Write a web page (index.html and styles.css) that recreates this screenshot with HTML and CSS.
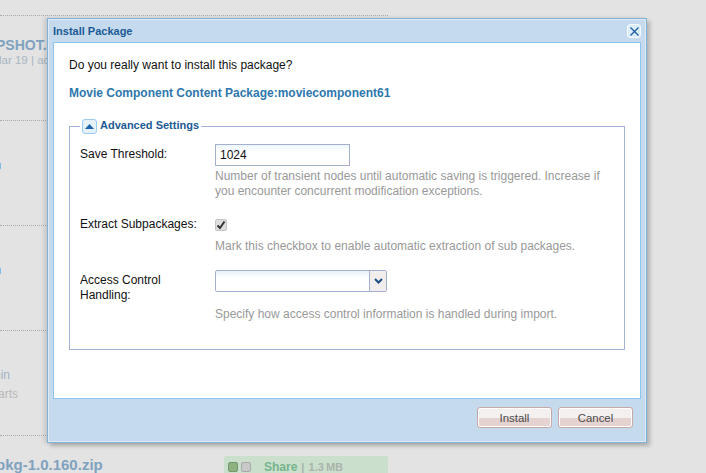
FILE: index.html
```html
<!DOCTYPE html>
<html>
<head>
  <meta name="viewport" content="width=device-width, initial-scale=1.0">
  <link rel="stylesheet" href="styles.css">
</head>
<body>

  <!-- Package list behind the mask -->
  <div class="list">
    <div class="row">
      <div class="pkg-name pkg-first">PSHOT.</div>
      <div class="pkg-meta">lar 19 | ad</div>
    </div>
    <div class="row"><span class="tick"></span></div>
    <div class="row"><span class="tick"></span></div>
    <div class="row">
      <div class="side-link">nin</div>
      <div class="side-text">arts</div>
    </div>
    <div class="row-last">
      <div class="pkg-name">pkg-1.0.160.zip</div>
      <div class="share-bar">
        <span class="sq sq-green"></span>
        <span class="sq sq-gray"></span>
        <span class="share">Share</span>
        <span class="size">|&nbsp; 1.3 MB</span>
      </div>
    </div>
  </div>

  <div class="dialog">
    <div class="dialog-head">
      <span class="dialog-title">Install Package</span>
      <button class="tool-btn close-btn" type="button">
        <svg width="9" height="9" viewBox="0 0 9 9"><path d="M.5.5 8.500 8.500M8.500.5 .5 8.500" stroke="#1c5a9c" stroke-width="1.2" fill="none"/></svg>
      </button>
    </div>

    <div class="dialog-body">
      <p class="question">Do you really want to install this package?</p>
      <p class="pkg-title">Movie Component Content Package:moviecomponent61</p>

      <fieldset class="settings">
        <legend>
          <button class="tool-btn toggle-btn" type="button">
            <svg width="9" height="5" viewBox="0 0 9 5"><path d="M4.500 0 9 5H0Z" fill="#1c62ac"/></svg>
          </button>
          <span class="legend-text">Advanced Settings</span>
        </legend>

        <div class="field field-threshold">
          <label class="field-label">Save Threshold:</label>
          <div class="field-main">
            <input class="text-input" type="text" value="1024">
            <p class="help">Number of transient nodes until automatic saving is triggered. Increase if you encounter concurrent modification exceptions.</p>
          </div>
        </div>

        <div class="field field-extract">
          <label class="field-label">Extract Subpackages:</label>
          <div class="field-main">
            <span class="check">
              <svg width="10" height="10" viewBox="0 0 10 10"><path d="M1.500 5.500 4 8 8.500 1.500" stroke="#333" stroke-width="2" fill="none"/></svg>
            </span>
            <p class="help">Mark this checkbox to enable automatic extraction of sub packages.</p>
          </div>
        </div>

        <div class="field">
          <label class="field-label">Access Control Handling:</label>
          <div class="field-main">
            <div class="combo">
              <span class="combo-text"></span>
              <span class="combo-arrow">
                <svg width="9" height="6" viewBox="0 0 9 6"><path d="M1 1 4.500 4.500 8 1" stroke="#1d4f80" stroke-width="2" fill="none"/></svg>
              </span>
            </div>
            <p class="help">Specify how access control information is handled during import.</p>
          </div>
        </div>
      </fieldset>
    </div>

    <div class="dialog-foot">
      <button class="foot-btn" type="button">Install</button>
      <button class="foot-btn" type="button">Cancel</button>
    </div>
  </div>

</body>
</html>
```

FILE: styles.css
```css
html, body {
  margin: 0;
  height: 100%;
  overflow: hidden;
}

body {
  background-color: #e3e3e3;
  font-family: 'Liberation Sans', Arial, sans-serif;
  font-size: 12px;
}

/* Page behind the dialog */
.list {
  width: 388px;
  padding-top: 15px;
}

.row {
  height: 104px;
  border-top: 1px dotted #aaa;
}

.row-last {
  border-top: 1px dotted #aaa;
  display: flex;
  height: 42px;
}

.pkg-name {
  color: #7fa2bf;
  font-size: 15px;
  font-weight: bold;
  white-space: nowrap;
  margin-top: 20px;
  margin-left: -4px;
  width: 228px;
}

.pkg-first {
  font-size: 14px;
  margin-top: 21px;
}

.pkg-meta {
  color: #a9b6c2;
  font-size: 11.5px;
  margin-top: 1px;
  margin-left: -1px;
}

.tick {
  display: block;
  width: 1px;
  height: 6px;
  background-color: #7fbce8;
  margin-top: 42px;
}

.side-link {
  color: #a3b3c1;
  margin-top: 37px;
  margin-left: -6px;
}

.side-text {
  color: #b8b8b8;
  margin-top: 5px;
  margin-left: -2px;
}

.share-bar {
  flex: 1;
  display: flex;
  align-items: center;
  height: 22px;
  margin-top: 20px;
  padding-left: 4px;
  background-color: #cbdfcd;
  border-radius: 2px 2px 0 0;
  font-weight: bold;
  color: #a9b3ab;
}

.sq {
  width: 8px;
  height: 8px;
  border: 1px solid #8f9f8f;
  border-radius: 2px;
  margin-right: 3px;
}

.sq-green {
  background-color: #8fb17f;
  border-color: #6f9a6f;
}

.sq-gray {
  background-color: #c9c9c9;
  border-color: #a9a9a9;
}

.share {
  color: #74b48c;
  margin-left: 10px;
  margin-right: 4px;
}

.size {
  font-size: 11px;
  word-spacing: -1px;
}

/* Dialog */
.dialog {
  position: absolute;
  top: 18px;
  left: 47px;
  width: 598px;
  height: 423px;
  display: flex;
  flex-direction: column;
  background-color: #c5daec;
  border: 1px solid #7fb2d9;
  box-shadow: inset 0 0 0 1px #dcebf6, 3px 3px 4px rgba(0, 0, 0, 0.22), -3px 0 4px rgba(0, 0, 0, 0.12);
}

.dialog-head {
  height: 23px;
  flex-shrink: 0;
  display: flex;
  align-items: center;
  justify-content: space-between;
  padding: 0 5px 0 5px;
}

.dialog-title {
  color: #1c5a96;
  font-weight: bold;
  font-size: 11px;
}

.tool-btn {
  display: flex;
  align-items: center;
  justify-content: center;
  padding: 0;
  width: 14px;
  height: 14px;
  border: 1px solid #f3f9fd;
  border-radius: 3px;
  background-color: #dcedfa;
}

.close-btn {
  margin-top: 1px;
}

.dialog-body {
  flex: 1;
  margin: 0 5px 0 5px;
  background-color: #fff;
  border: 1px solid #8cc6ee;
  padding: 0 15px;
  color: #111;
}

.question {
  margin: 0;
  padding-top: 15px;
  line-height: 14px;
}

.pkg-title {
  margin: 0;
  padding-top: 14px;
  line-height: 14px;
  font-weight: bold;
  color: #2e77ae;
}

.settings {
  margin: 19px 0 0 0;
  padding: 0 10px;
  height: 231px;
  box-sizing: border-box;
  border: 1px solid #a3b3d8;
}

.settings legend {
  display: flex;
  align-items: center;
  gap: 3px;
  padding: 0 2px;
  color: #1c5a96;
  font-weight: bold;
  font-size: 11px;
}

.legend-text {
  padding-bottom: 3px;
}

.toggle-btn {
  width: 15px;
  height: 15px;
  border: 1px solid #9ccbee;
  background-color: #e4f1fb;
}

.field {
  display: grid;
  grid-template-columns: 135px 1fr;
}

.field-threshold {
  padding-top: 10px;
  height: 73px;
}

.field-extract {
  height: 52px;
  padding-top: 1px;
}

.field-label {
  padding-top: 3px;
  padding-right: 15px;
  line-height: 15px;
}

.field-extract .field-label {
  padding-top: 0;
  margin-top: -1px;
}

.text-input {
  display: block;
  box-sizing: border-box;
  width: 135px;
  height: 22px;
  margin: 0;
  padding: 0 4px;
  border: 1px solid #a4b0cf;
  font-family: 'Liberation Sans', Arial, sans-serif;
  font-size: 12px;
  color: #111;
  background: linear-gradient(#eef6fb, #fff 7px);
  outline: none;
}

.help {
  margin: 0;
  padding-top: 3px;
  line-height: 15px;
  color: #999;
}

.check {
  display: flex;
  align-items: center;
  justify-content: center;
  box-sizing: border-box;
  width: 12px;
  height: 12px;
  margin: 1px 0 5px;
  background-color: #dedede;
  border: 1px solid #c4c4c4;
  border-radius: 2px;
}

.combo {
  display: flex;
  box-sizing: border-box;
  width: 172px;
  height: 22px;
  margin-bottom: 12px;
  border: 1px solid #a4b0cf;
  border-radius: 2px;
  background: linear-gradient(#e6f2f8, #fff 7px);
}

.combo-text {
  flex: 1;
}

.combo-arrow {
  display: flex;
  align-items: center;
  justify-content: center;
  width: 16px;
  border-left: 1px solid #a4b0cf;
  background-color: #f1eded;
}

/* Footer buttons */
.dialog-foot {
  height: 43px;
  flex-shrink: 0;
  display: flex;
  justify-content: flex-end;
  gap: 6px;
  padding: 8px 13px 0 0;
  box-sizing: border-box;
}

.foot-btn {
  width: 75px;
  height: 21px;
  padding: 0;
  border: 1px solid #c9a9a7;
  border-radius: 3px;
  box-shadow: inset 0 0 0 1px #fff;
  background: linear-gradient(#f4f0f0 0, #f4f0f0 55%, #e4d3d0 55%, #e4d3d0 100%);
  font-family: 'Liberation Sans', Arial, sans-serif;
  font-size: 11.4px;
  color: #4a4a4a;
}
```
